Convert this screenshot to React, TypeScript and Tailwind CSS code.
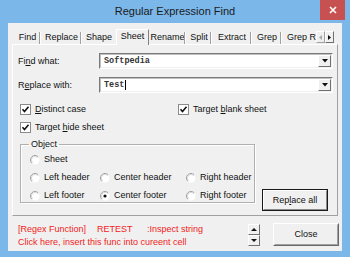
import React from "react";

const U = ({ c }: { c: string }) => <span className="underline underline-offset-[1px]">{c}</span>;

function Check({ label, u, pre }: { label: string; u: string; pre: string }) {
  const rest = label.slice(pre.length + u.length);
  return (
    <div className="flex items-center h-[11px]">
      <div className="w-[11px] h-[11px] border border-[#8a8a8a] bg-white flex items-center justify-center">
        <svg width="9" height="9" viewBox="0 0 9 9">
          <polyline points="1.5,4.2 3.5,6.5 7.5,1.8" fill="none" stroke="#111" strokeWidth="1.6" />
        </svg>
      </div>
      <span className="ml-[4px] leading-none">
        {pre}
        <U c={u} />
        {rest}
      </span>
    </div>
  );
}

function Radio({ label, on }: { label: string; on?: boolean }) {
  return (
    <div className="flex items-center h-[11px]">
      <svg width="10" height="10" viewBox="0 0 10 10">
        <circle cx="5" cy="5" r="4.5" fill="#fff" />
        <path d="M8.2 1.8 A4.5 4.5 0 0 0 1.8 8.2" fill="none" stroke="#a0a0a0" strokeWidth="1" />
        <path d="M7.5 2.5 A3.5 3.5 0 0 0 2.5 7.5" fill="none" stroke="#d8d8d8" strokeWidth="1" />
        {on && <circle cx="5" cy="5" r="1.6" fill="#111" />}
      </svg>
      <span className="ml-[4px] leading-none">{label}</span>
    </div>
  );
}

function Combo({ value, caret }: { value: string; caret?: boolean }) {
  return (
    <div className="w-[234px] h-[16px] border border-t-[#7a7a7a] border-l-[#7a7a7a] border-r-white border-b-white bg-white flex items-center">
      <div className="flex-1 h-full border border-t-[#c0c0c0] border-l-[#c0c0c0] border-r-[#f0f0f0] border-b-[#f0f0f0] flex items-center pl-[3px] font-['Liberation_Mono',monospace] font-bold text-[8.5px] text-[#333]">
        {value}
        {caret && <span className="inline-block w-[1px] h-[10px] bg-black ml-[1px]" />}
        <div className="flex-1" />
        <div className="w-[13px] h-[12px] bg-[#f0f0f0] border border-t-white border-l-white border-r-[#707070] border-b-[#707070] flex items-center justify-center">
          <svg width="6" height="4" viewBox="0 0 6 4"><path d="M0 0h6L3 3.5z" fill="#111" /></svg>
        </div>
      </div>
    </div>
  );
}

const tabs: [string, number][] = [
  ["Find", 27],
  ["Replace", 41],
  ["Shape", 34],
  ["Sheet", 33],
  ["Rename", 37],
  ["Split", 26],
  ["Extract", 40],
  ["Grep", 30],
  ["Grep R", 34],
];

export default function App() {
  return (
    <div className="w-[350px] h-[257px] bg-[#7cb7ea] flex flex-col font-['Liberation_Sans',Arial,sans-serif] text-[9px] text-[#111] overflow-hidden">
      {/* title bar */}
      <div className="h-[23px] relative flex items-center justify-center">
        <span className="text-[11px] text-[#1a1a1a] mt-[-1px]">Regular Expression Find</span>
        <div className="absolute right-[5px] top-0 w-[25px] h-[20px] bg-[#c75050] flex items-center justify-center">
          <svg width="8" height="8" viewBox="0 0 8 8">
            <path d="M1 1L7 7M7 1L1 7" stroke="#fff" strokeWidth="1.6" />
          </svg>
        </div>
      </div>
      {/* client */}
      <div className="mx-[8px] h-[228px] bg-[#f0f0f0] flex flex-col">
        <div className="pl-[4px] pt-[7px]">
          {/* tab strip */}
          <div className="h-[14px] w-[326px] flex items-end relative z-10">
            <div className="w-[2px]" />
            {tabs.map(([t, w]) =>
              t === "Sheet" ? (
                <div
                  key={t}
                  style={{ width: w }}
                  className="h-[16px] mb-[-1px] bg-[#f0f0f0] border-l border-t border-white border-r border-r-[#808080] flex items-start justify-center pt-[2px] leading-none"
                >
                  {t}
                </div>
              ) : (
                <div
                  key={t}
                  style={{ width: w }}
                  className="h-[13px] flex items-center justify-center leading-none relative overflow-hidden whitespace-nowrap"
                >
                  <span className={t === "Grep R" ? "pl-[5px] w-full" : ""}>{t}</span>
                  {t !== "Grep R" && t !== "Shape" && (
                    <span className="absolute right-0 top-[1px] h-[12px] w-[2px] border-l border-[#a0a0a0] border-r border-r-white" />
                  )}
                </div>
              )
            )}
            <div className="flex h-[12px] mb-[1px]">
              <div className="w-[9px] h-[12px] border border-t-white border-l-white border-r-[#a0a0a0] border-b-[#a0a0a0] flex items-center justify-center">
                <svg width="3" height="5" viewBox="0 0 3 5"><path d="M3 0v5L0 2.5z" fill="#a8a8a8" /></svg>
              </div>
              <div className="w-[9px] h-[12px] border border-t-white border-l-white border-r-[#707070] border-b-[#707070] flex items-center justify-center">
                <svg width="3" height="5" viewBox="0 0 3 5"><path d="M0 0v5L3 2.5z" fill="#111" /></svg>
              </div>
            </div>
          </div>
          {/* panel */}
          <div className="w-[326px] h-[172px] border border-t-white border-l-white border-r-[#a0a0a0] border-b-[#a0a0a0] pl-[5px] flex flex-col">
            <div className="flex items-center mt-[8px] h-[16px]">
              <div className="w-[81px] leading-none">
                Fi<U c="n" />d what:
              </div>
              <Combo value="Softpedia" />
            </div>
            <div className="flex items-center mt-[8px] h-[16px]">
              <div className="w-[81px] leading-none">
                R<U c="e" />place with:
              </div>
              <Combo value="Test" caret />
            </div>
            <div className="flex mt-[11px] pl-[2px]">
              <div className="w-[158px]">
                <Check label="Distinct case" pre="" u="D" />
              </div>
              <Check label="Target blank sheet" pre="Target " u="b" />
            </div>
            <div className="flex mt-[7px] pl-[2px]">
              <Check label="Target hide sheet" pre="Target " u="h" />
            </div>
            <div className="flex items-start mt-[6px] pl-[2px]">
              <fieldset className="w-[235px] h-[64px] border border-[#b0b0b0] shadow-[inset_1px_1px_0_#fff,1px_1px_0_#fff]">
                <legend className="ml-[8px] px-[2px] leading-[11px]">Object</legend>
                <div className="grid grid-cols-[70px_86px_1fr] pl-[9px] gap-y-[7px] mt-[4px]">
                  <Radio label="Sheet" />
                  <div />
                  <div />
                  <Radio label="Left header" />
                  <Radio label="Center header" />
                  <Radio label="Right header" />
                  <Radio label="Left footer" />
                  <Radio label="Center footer" on />
                  <Radio label="Right footer" />
                </div>
              </fieldset>
              <div className="ml-[7px] mt-[50px] w-[66px] h-[22px] border border-[#1a1a1a] bg-[#f0f0f0]">
                <div className="w-full h-full border border-t-white border-l-white border-r-[#8a8a8a] border-b-[#8a8a8a] flex items-center justify-center leading-none">
                  Rep<U c="l" />ace all
                </div>
              </div>
            </div>
          </div>
        </div>
        {/* bottom */}
        <div className="flex pt-[7px]">
          <div className="w-[240px] pl-[10px] text-[#f01c1c] leading-[13px] whitespace-nowrap">
            <div>
              <span className="inline-block w-[79px]">[Regex Function]</span>
              <span className="inline-block w-[50px]">RETEST</span>
              <span>:Inspect string</span>
            </div>
            <div>Click here, insert this func into cureent cell</div>
          </div>
          <div className="w-[12px] flex flex-col mt-[1px]">
            <div className="h-[11px] border border-t-white border-l-white border-r-[#707070] border-b-[#707070] flex items-center justify-center">
              <svg width="6" height="3" viewBox="0 0 6 3"><path d="M0 3h6L3 0z" fill="#111" /></svg>
            </div>
            <div className="h-[11px] border border-t-white border-l-white border-r-[#707070] border-b-[#707070] flex items-center justify-center">
              <svg width="6" height="3" viewBox="0 0 6 3"><path d="M0 0h6L3 3z" fill="#111" /></svg>
            </div>
          </div>
          <div className="ml-[13px] w-[66px] h-[23px] border border-t-white border-l-white border-r-[#696969] border-b-[#696969]">
            <div className="w-full h-full border border-t-[#f0f0f0] border-l-[#f0f0f0] border-r-[#a0a0a0] border-b-[#a0a0a0] flex items-center justify-center leading-none">
              Close
            </div>
          </div>
        </div>
      </div>
    </div>
  );
}
